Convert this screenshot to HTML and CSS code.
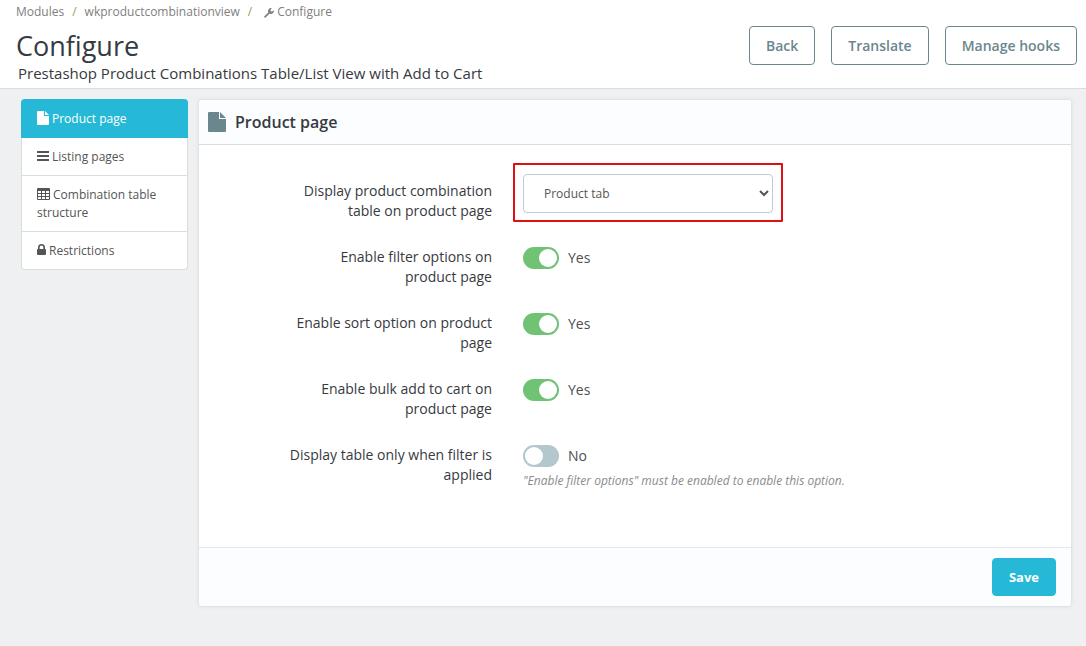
FILE: index.html
```html
<!DOCTYPE html>
<html lang="en">
<head>
  <meta charset="UTF-8" />
  <meta name="viewport" content="width=device-width, initial-scale=1.0" />
  <title>Configure</title>
  <link rel="stylesheet" href="styles.css">
</head>
<body>
  <header class="page-head">
    <div class="page-info">
      <nav class="breadcrumb">
        <a href="#">Modules</a>
        <span class="sep">/</span>
        <a href="#">wkproductcombinationview</a>
        <span class="sep">/</span>
        <a href="#" class="current"><svg width="10" height="10" viewBox="0 0 10 10"><path fill="currentColor" d="M1.6 9.6a1 1 0 0 1-1.3-1.3L4.300 4.400a3 3 0 0 1 3.500-4.200L6.500 1.900l.2 1.300 1.300.3L9.800 2.200a3 3 0 0 1-4.200 3.500z"/></svg>Configure</a>
      </nav>
      <h1>Configure</h1>
      <p class="subtitle">Prestashop Product Combinations Table/List View with Add to Cart</p>
    </div>
    <div class="toolbar">
      <button type="button" class="btn">Back</button>
      <button type="button" class="btn">Translate</button>
      <button type="button" class="btn">Manage hooks</button>
    </div>
  </header>

  <main class="content">
    <nav class="side-nav">
      <a href="#" class="active"><svg width="12" height="14" viewBox="0 0 12 14"><path fill="currentColor" d="M0 1q0-1 1-1h6v5h5v8q0 1-1 1H1q-1 0-1-1zM8 0l4 4H8z"/></svg>Product page</a>
      <a href="#"><svg width="12" height="12" viewBox="0 0 12 12"><path fill="currentColor" d="M0 1h12v2H0zM0 5h12v2H0zM0 9h12v2H0z"/></svg>Listing pages</a>
      <a href="#"><svg width="13" height="12" viewBox="0 0 13 12"><path fill="currentColor" fill-rule="evenodd" d="M1 0h11q1 0 1 1v10q0 1-1 1H1q-1 0-1-1V1q0-1 1-1zM1 3v2h3V3zM5 3v2h3V3zM9 3v2h3V3zM1 6v2h3V6zM5 6v2h3V6zM9 6v2h3V6zM1 9v2h3V9zM5 9v2h3V9zM9 9v2h3V9z"/></svg>Combination table structure</a>
      <a href="#"><svg width="9" height="12" viewBox="0 0 9 12"><path fill="currentColor" fill-rule="evenodd" d="M1 5V3.500a3.500 3.500 0 0 1 7 0V5q1 0 1 1v4q0 1-1 1H1q-1 0-1-1V6q0-1 1-1zM2.600 5h3.800V3.500a1.900 1.900 0 0 0-3.800 0z"/></svg>Restrictions</a>
    </nav>

    <form class="panel">
      <h2 class="panel-heading"><svg width="18" height="20" viewBox="0 0 18 20"><path fill="currentColor" d="M0 1q0-1 1-1h10v7h7v12q0 1-1 1H1q-1 0-1-1zM12 0l6 6h-6z"/></svg>Product page</h2>
      <div class="panel-body">
        <div class="form-row">
          <label for="display">Display product combination table on product page</label>
          <div class="highlight">
            <select id="display">
              <option>Product tab</option>
              <option>Product footer</option>
            </select>
          </div>
        </div>
        <div class="form-row">
          <label for="filter">Enable filter options on product page</label>
          <div class="field">
            <div class="switch"><input type="checkbox" id="filter" checked><span>Yes</span></div>
          </div>
        </div>
        <div class="form-row">
          <label for="sort">Enable sort option on product page</label>
          <div class="field">
            <div class="switch"><input type="checkbox" id="sort" checked><span>Yes</span></div>
          </div>
        </div>
        <div class="form-row">
          <label for="bulk">Enable bulk add to cart on product page</label>
          <div class="field">
            <div class="switch"><input type="checkbox" id="bulk" checked><span>Yes</span></div>
          </div>
        </div>
        <div class="form-row">
          <label for="only">Display table only when filter is applied</label>
          <div class="field">
            <div class="switch"><input type="checkbox" id="only"><span>No</span></div>
            <p class="help">"Enable filter options" must be enabled to enable this option.</p>
          </div>
        </div>
      </div>
      <div class="panel-footer">
        <button type="submit" class="btn btn-save">Save</button>
      </div>
    </form>
  </main>
  <script>
    document.querySelectorAll('.switch input').forEach(box => {
      box.onchange = () => {
        box.nextElementSibling.textContent = box.checked ? 'Yes' : 'No';
      };
    });
  </script>
</body>
</html>
```

FILE: styles.css
```css
* { box-sizing: border-box; }
body {
  margin: 0;
  background: #eef0f2;
  font-family: "Open Sans", sans-serif;
  font-size: 14px;
  line-height: 20px;
  color: #363a41;
}
h1, h2, p { margin: 0; }
a {
  color: inherit;
  text-decoration: none;
}
.page-head {
  display: flex;
  justify-content: space-between;
  background: #fff;
  border-bottom: 1px solid #dadddf;
  padding: 2px 9px 5px 16px;
}
.breadcrumb {
  display: flex;
  gap: 8px;
  font-size: 12px;
  color: #808080;
}
.breadcrumb .sep { color: #7fa84a; }
.breadcrumb .current { margin-left: 4px; }
.breadcrumb svg {
  margin-right: 3px;
  vertical-align: -2px;
}
.page-head h1 {
  padding-top: 7px;
  font-size: 27px;
  font-weight: 400;
  line-height: 34px;
}
.subtitle {
  padding-left: 2px;
  font-size: 15px;
}
.toolbar {
  display: flex;
  gap: 16px;
  align-items: flex-start;
  padding-top: 24px;
}
.btn {
  height: 39px;
  padding: 0 16px;
  font-family: inherit;
  font-size: 14px;
  font-weight: 600;
  color: #6c868e;
  background: #fff;
  border: 1px solid #6c868e;
  border-radius: 4px;
  cursor: pointer;
}
.content {
  display: flex;
  align-items: flex-start;
  gap: 10px;
  padding: 10px 14px 30px 21px;
}
.side-nav {
  width: 167px;
  flex-shrink: 0;
  background: #fff;
  border: 1px solid #dadddf;
  border-top: none;
  border-radius: 4px;
  font-size: 12px;
  line-height: 18px;
  color: #555;
}
.side-nav a {
  display: block;
  padding: 10px 15px 9px;
}
.side-nav a + a + a { border-top: 1px solid #dadddf; }
.side-nav .active {
  margin: 0 -1px;
  padding: 11px 16px 10px;
  background: #25b9d7;
  border-radius: 4px 4px 0 0;
  color: #fff;
}
.side-nav svg {
  margin-right: 3px;
  vertical-align: -1px;
}
.side-nav .active svg { vertical-align: -2px; }
.panel {
  flex: 1;
  background: #fff;
  border: 1px solid #dfe4e6;
  border-radius: 4px;
  box-shadow: 0 0 4px rgba(0,0,0,0.06);
  overflow: hidden;
}
.panel-heading {
  display: flex;
  align-items: center;
  gap: 9px;
  height: 45px;
  padding: 0 9px;
  background: #fbfdfe;
  border-bottom: 1px solid #dadddf;
  font-size: 16px;
  font-weight: 600;
}
.panel-heading svg { color: #6c868e; }
.panel-body {
  display: grid;
  gap: 19px;
  padding: 29px 16px 56px 89px;
}
.form-row {
  display: grid;
  grid-template-columns: 204px 1fr;
  gap: 31px;
  align-items: start;
}
.form-row label {
  padding-top: 7px;
  text-align: right;
}
.form-row select {
  display: block;
  width: 100%;
  height: 39px;
  padding: 0 0 0 16px;
  font-family: inherit;
  font-size: 12px;
  color: #555;
  background: #fff;
  border: 1px solid #bbcdd2;
  border-radius: 4px;
}
.highlight {
  position: relative;
  width: 250px;
}
.highlight::after {
  content: "";
  position: absolute;
  inset: -11px -10px -9px;
  border: 2px solid #dc1212;
  border-radius: 1px;
  pointer-events: none;
}
.field { padding-top: 7px; }
.switch {
  display: flex;
  align-items: center;
  gap: 9px;
  color: #4d4f53;
}
.switch input {
  appearance: none;
  width: 36px;
  height: 22px;
  margin: 0;
  padding: 2px;
  background: #b3c7cd;
  border-radius: 11px;
  cursor: pointer;
}
.switch input::before {
  content: "";
  display: block;
  width: 18px;
  height: 18px;
  background: #fff;
  border-radius: 50%;
}
.switch input:checked { background: #70c274; }
.switch input:checked::before { margin-left: 14px; }
.help {
  padding-top: 4px;
  font-size: 12px;
  font-style: italic;
  color: #8b8b8b;
}
.panel-footer {
  display: flex;
  justify-content: flex-end;
  padding: 10px 15px;
  background: #fbfdfe;
  border-top: 1px solid #e3e8ea;
}
.btn-save {
  height: 38px;
  background: #25b9d7;
  border-color: #25b9d7;
  color: #fff;
  font-size: 13px;
  font-weight: 700;
}
```
